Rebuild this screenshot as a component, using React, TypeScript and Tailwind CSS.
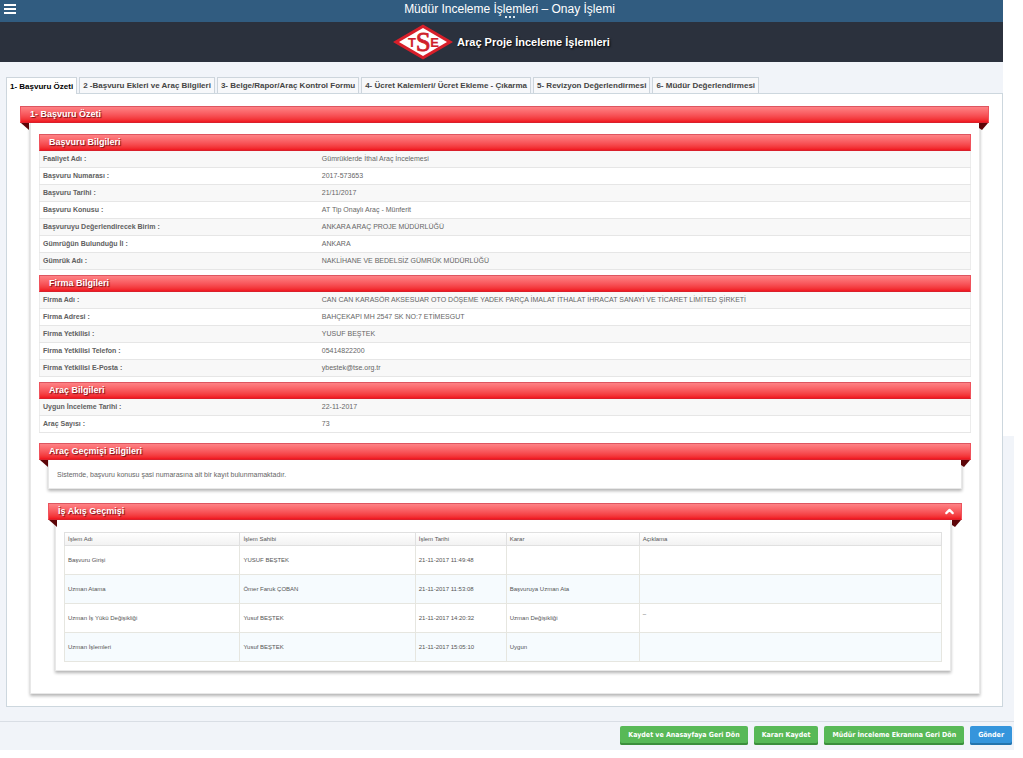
import React, { useState } from "react";
import { ChevronUp } from "lucide-react";

type Field = [string, string];

const tabs = [
  "1- Başvuru Özeti",
  "2 -Başvuru Ekleri ve Araç Bilgileri",
  "3- Belge/Rapor/Araç Kontrol Formu",
  "4- Ücret Kalemleri/ Ücret Ekleme - Çıkarma",
  "5- Revizyon Değerlendirmesi",
  "6- Müdür Değerlendirmesi",
];

const sections: { title: string; fields: Field[] }[] = [
  {
    title: "Başvuru Bilgileri",
    fields: [
      ["Faaliyet Adı :", "Gümrüklerde İthal Araç İncelemesi"],
      ["Başvuru Numarası :", "2017-573653"],
      ["Başvuru Tarihi :", "21/11/2017"],
      ["Başvuru Konusu :", "AT Tip Onaylı Araç - Münferit"],
      ["Başvuruyu Değerlendirecek Birim :", "ANKARA ARAÇ PROJE MÜDÜRLÜĞÜ"],
      ["Gümrüğün Bulunduğu İl :", "ANKARA"],
      ["Gümrük Adı :", "NAKLİHANE VE BEDELSİZ GÜMRÜK MÜDÜRLÜĞÜ"],
    ],
  },
  {
    title: "Firma Bilgileri",
    fields: [
      [
        "Firma Adı :",
        "CAN CAN KARASÖR AKSESUAR OTO DÖŞEME YADEK PARÇA İMALAT İTHALAT İHRACAT SANAYİ VE TİCARET LİMİTED ŞİRKETİ",
      ],
      ["Firma Adresi :", "BAHÇEKAPI MH 2547 SK NO:7 ETİMESGUT"],
      ["Firma Yetkilisi :", "YUSUF BEŞTEK"],
      ["Firma Yetkilisi Telefon :", "05414822200"],
      ["Firma Yetkilisi E-Posta :", "ybestek@tse.org.tr"],
    ],
  },
  {
    title: "Araç Bilgileri",
    fields: [
      ["Uygun İnceleme Tarihi :", "22-11-2017"],
      ["Araç Sayısı :", "73"],
    ],
  },
];

const flowHeads = ["İşlem Adı", "İşlem Sahibi", "İşlem Tarihi", "Karar", "Açıklama"];

const flowRows = [
  ["Başvuru Girişi", "YUSUF BEŞTEK", "21-11-2017 11:49:48", "", ""],
  ["Uzman Atama", "Ömer Faruk ÇOBAN", "21-11-2017 11:53:08", "Başvuruya Uzman Ata", ""],
  ["Uzman İş Yükü Değişikliği", "Yusuf BEŞTEK", "21-11-2017 14:20:32", "Uzman Değişikliği", "–"],
  ["Uzman İşlemleri", "Yusuf BEŞTEK", "21-11-2017 15:05:10", "Uygun", ""],
];

const actions = [
  { label: "Kaydet ve Anasayfaya Geri Dön", blue: false },
  { label: "Kararı Kaydet", blue: false },
  { label: "Müdür İnceleme Ekranına Geri Dön", blue: false },
  { label: "Gönder", blue: true },
];

const redBar =
  "h-[17px] border border-t-[#dd5560] border-x-[#f0525c] border-b-[#d9202b] bg-linear-to-b from-[#fe8285] via-[#f8575c] to-[#f0141f] text-[9px] font-bold leading-[15px] text-white [text-shadow:1px_1px_1px_#7a1016]";

function Logo() {
  return (
    <svg width="60" height="36" viewBox="0 0 60 36" role="img" aria-label="TSE">
      <path d="M30 0.500L60 18L30 35.500L0 18Z" fill="#d81f2a" />
      <path d="M30 4L54 18L30 32L6 18Z" fill="#fff" />
      <g fill="#cf1f2b" stroke="#cf1f2b" textAnchor="middle">
        <text x="19" y="23" fontSize="13" fontFamily="Liberation Sans, sans-serif" fontWeight="700" strokeWidth="0.200">T</text>
        <text x="30.300" y="27" fontSize="27" fontFamily="Liberation Serif, serif" strokeWidth="0.800">S</text>
        <text x="41.500" y="23" fontSize="13" fontFamily="Liberation Sans, sans-serif" fontWeight="700" strokeWidth="0.200">E</text>
      </g>
    </svg>
  );
}

function Ribbon({ title, children }: { title: string; children?: React.ReactNode }) {
  return (
    <div className={`relative flex items-center justify-between pr-[5px] pl-[9px] ${redBar}`}>
      <h2>{title}</h2>
      {children}
      <svg className="absolute top-[16px] left-0" width="8" height="7" viewBox="0 0 8 7" aria-hidden="true">
        <path d="M0 0H8V7Z" fill="#5c0508" />
      </svg>
      <svg className="absolute top-[16px] right-0" width="9" height="7" viewBox="0 0 9 7" aria-hidden="true">
        <path d="M0 0H9L3 7L0 5Z" fill="#5c0508" />
      </svg>
    </div>
  );
}

function FieldSection({ title, fields }: { title: string; fields: Field[] }) {
  return (
    <section>
      <h3 className={`pl-[9px] ${redBar}`}>{title}</h3>
      <table className="w-full table-fixed border-collapse border-x border-[#ececec] text-left text-[7px] leading-[16px] text-[#666]">
        <tbody>
          {fields.map(([label, value]) => (
            <tr key={label} className="border-b border-[#e6e6e6] odd:bg-[#f8f8f8]">
              <th scope="row" className="w-[30%] p-0 pl-[3px] font-bold text-[#606060]">{label}</th>
              <td className="p-0 pl-[3px] whitespace-nowrap">{value}</td>
            </tr>
          ))}
        </tbody>
      </table>
    </section>
  );
}

export default function App() {
  const [active, setActive] = useState(0);
  const [open, setOpen] = useState(true);
  const boxShadow = "border border-t-0 border-[#e8e8e8] bg-white shadow-[0_2px_3px_#b4b4b4]";

  return (
    <div className="min-h-screen bg-white pr-[9px] font-['Liberation_Sans',Arial,sans-serif]">
      <div className="bg-[#f1f4f9]">
        <div className="flex">
          <div className="min-w-0 flex-1">
            <div className="flex h-[22px] items-center bg-[#315c80] text-white">
              <button aria-label="Menü" className="mb-[4px] ml-[4px] flex w-[12px] flex-col gap-[2px]">
                <span className="h-[2px] w-full bg-white" />
                <span className="h-[2px] w-full bg-white" />
                <span className="h-[2px] w-full bg-white" />
              </button>
              <div className="relative flex-1 text-center">
                <h1 className="pb-[4px] text-[12px] leading-[18px]">Müdür Inceleme İşlemleri – Onay İşlemi</h1>
                <svg className="absolute bottom-[4px] left-1/2 -translate-x-1/2" width="10" height="2" viewBox="0 0 10 2" aria-hidden="true">
                  <path d="M0 0h2v2H0zM4 0h2v2H4zM8 0h2v2H8z" fill="#dbe6ef" />
                </svg>
              </div>
            </div>

            <header className="flex h-[40px] items-center justify-center gap-[4px] bg-[#2b313d] text-white">
              <Logo />
              <span className="text-[11px] font-bold [text-shadow:1px_1px_2px_#000]">Araç Proje İnceleme İşlemleri</span>
            </header>

            <main className="pt-[15px] pl-[6px]">
              <div role="tablist" className="flex gap-[2px]">
                {tabs.map((tab, i) => (
                  <button
                    key={tab}
                    role="tab"
                    aria-selected={i === active}
                    onClick={() => setActive(i)}
                    className={`border border-b-0 border-[#cdd5dc] px-[3px] text-[8px] leading-[15px] font-bold whitespace-nowrap ${
                      i === active ? "-mb-px h-[17px] bg-white text-black" : "h-[16px] bg-[#f7f8fa] text-[#444]"
                    }`}
                  >
                    {tab}
                  </button>
                ))}
              </div>

              <div className="border border-[#cdd7de] bg-white px-[13px] pt-[12px] pb-[12px]">
                <Ribbon title="1- Başvuru Özeti" />
                <div className={`mr-[9px] ml-[10px] px-[8px] pt-[11px] pb-[22px] ${boxShadow}`}>
                  <div className="flex flex-col gap-[5px]">
                    {sections.map((s) => (
                      <FieldSection key={s.title} {...s} />
                    ))}
                  </div>

                  <section className="mt-[10px]">
                    <Ribbon title="Araç Geçmişi Bilgileri" />
                    <p className={`mx-[9px] px-[8px] pt-[10px] pb-[9px] text-[7px] leading-[9px] text-[#666] ${boxShadow}`}>
                      Sistemde, başvuru konusu şasi numarasına ait bir kayıt bulunmamaktadır.
                    </p>
                  </section>

                  <section className="mx-[9px] mt-[14px]">
                    <Ribbon title="İş Akış Geçmişi">
                      <button aria-label="İş Akış Geçmişi" aria-expanded={open} onClick={() => setOpen(!open)}>
                        <ChevronUp size={13} strokeWidth={4} />
                      </button>
                    </Ribbon>
                    {open && (
                      <div className={`mr-[11px] ml-[7px] px-[8px] pt-[12px] pb-[8px] ${boxShadow}`}>
                        <table className="w-full table-fixed border-collapse border border-[#d9dfe0] text-left text-[6px] leading-[8px] text-[#555]">
                          <colgroup>
                            <col className="w-[20%]" />
                            <col className="w-[20%]" />
                            <col className="w-[91px]" />
                            <col className="w-[133px]" />
                            <col />
                          </colgroup>
                          <thead>
                            <tr className="h-[13px] bg-linear-to-b from-white to-[#f1f1f1]">
                              {flowHeads.map((h) => (
                                <th key={h} scope="col" className="border border-[#e0e0e0] p-0 pl-[3px] font-normal">{h}</th>
                              ))}
                            </tr>
                          </thead>
                          <tbody>
                            {flowRows.map((row) => (
                              <tr key={row[2]} className="h-[29px] even:bg-[#f6fbfe]">
                                {row.map((cell, i) => (
                                  <td key={i} className="border border-[#e6e6e0] p-0 pl-[3px] last:pb-[8px]">{cell}</td>
                                ))}
                              </tr>
                            ))}
                          </tbody>
                        </table>
                      </div>
                    )}
                  </section>
                </div>
              </div>
            </main>
          </div>
          <div className="w-[11px]">
            <div className="h-[436px] bg-white" />
          </div>
        </div>

        <footer className="mt-[14px] flex justify-end gap-[6px] border-t border-[#d9dee5] pt-[4px] pr-[2px] pb-[5px]">
          {actions.map((a) => (
            <button
              key={a.label}
              className={`h-[19px] rounded-[2px] px-[8px] font-['DejaVu_Sans_Condensed','DejaVu_Sans',sans-serif] text-[7px] leading-[19px] font-bold text-white ${
                a.blue
                  ? "bg-[#3595dc] shadow-[inset_0_-2px_0_#2474ad]"
                  : "bg-[#58b957] shadow-[inset_0_-2px_0_#3c8f3c]"
              }`}
            >
              {a.label}
            </button>
          ))}
        </footer>
      </div>
    </div>
  );
}
